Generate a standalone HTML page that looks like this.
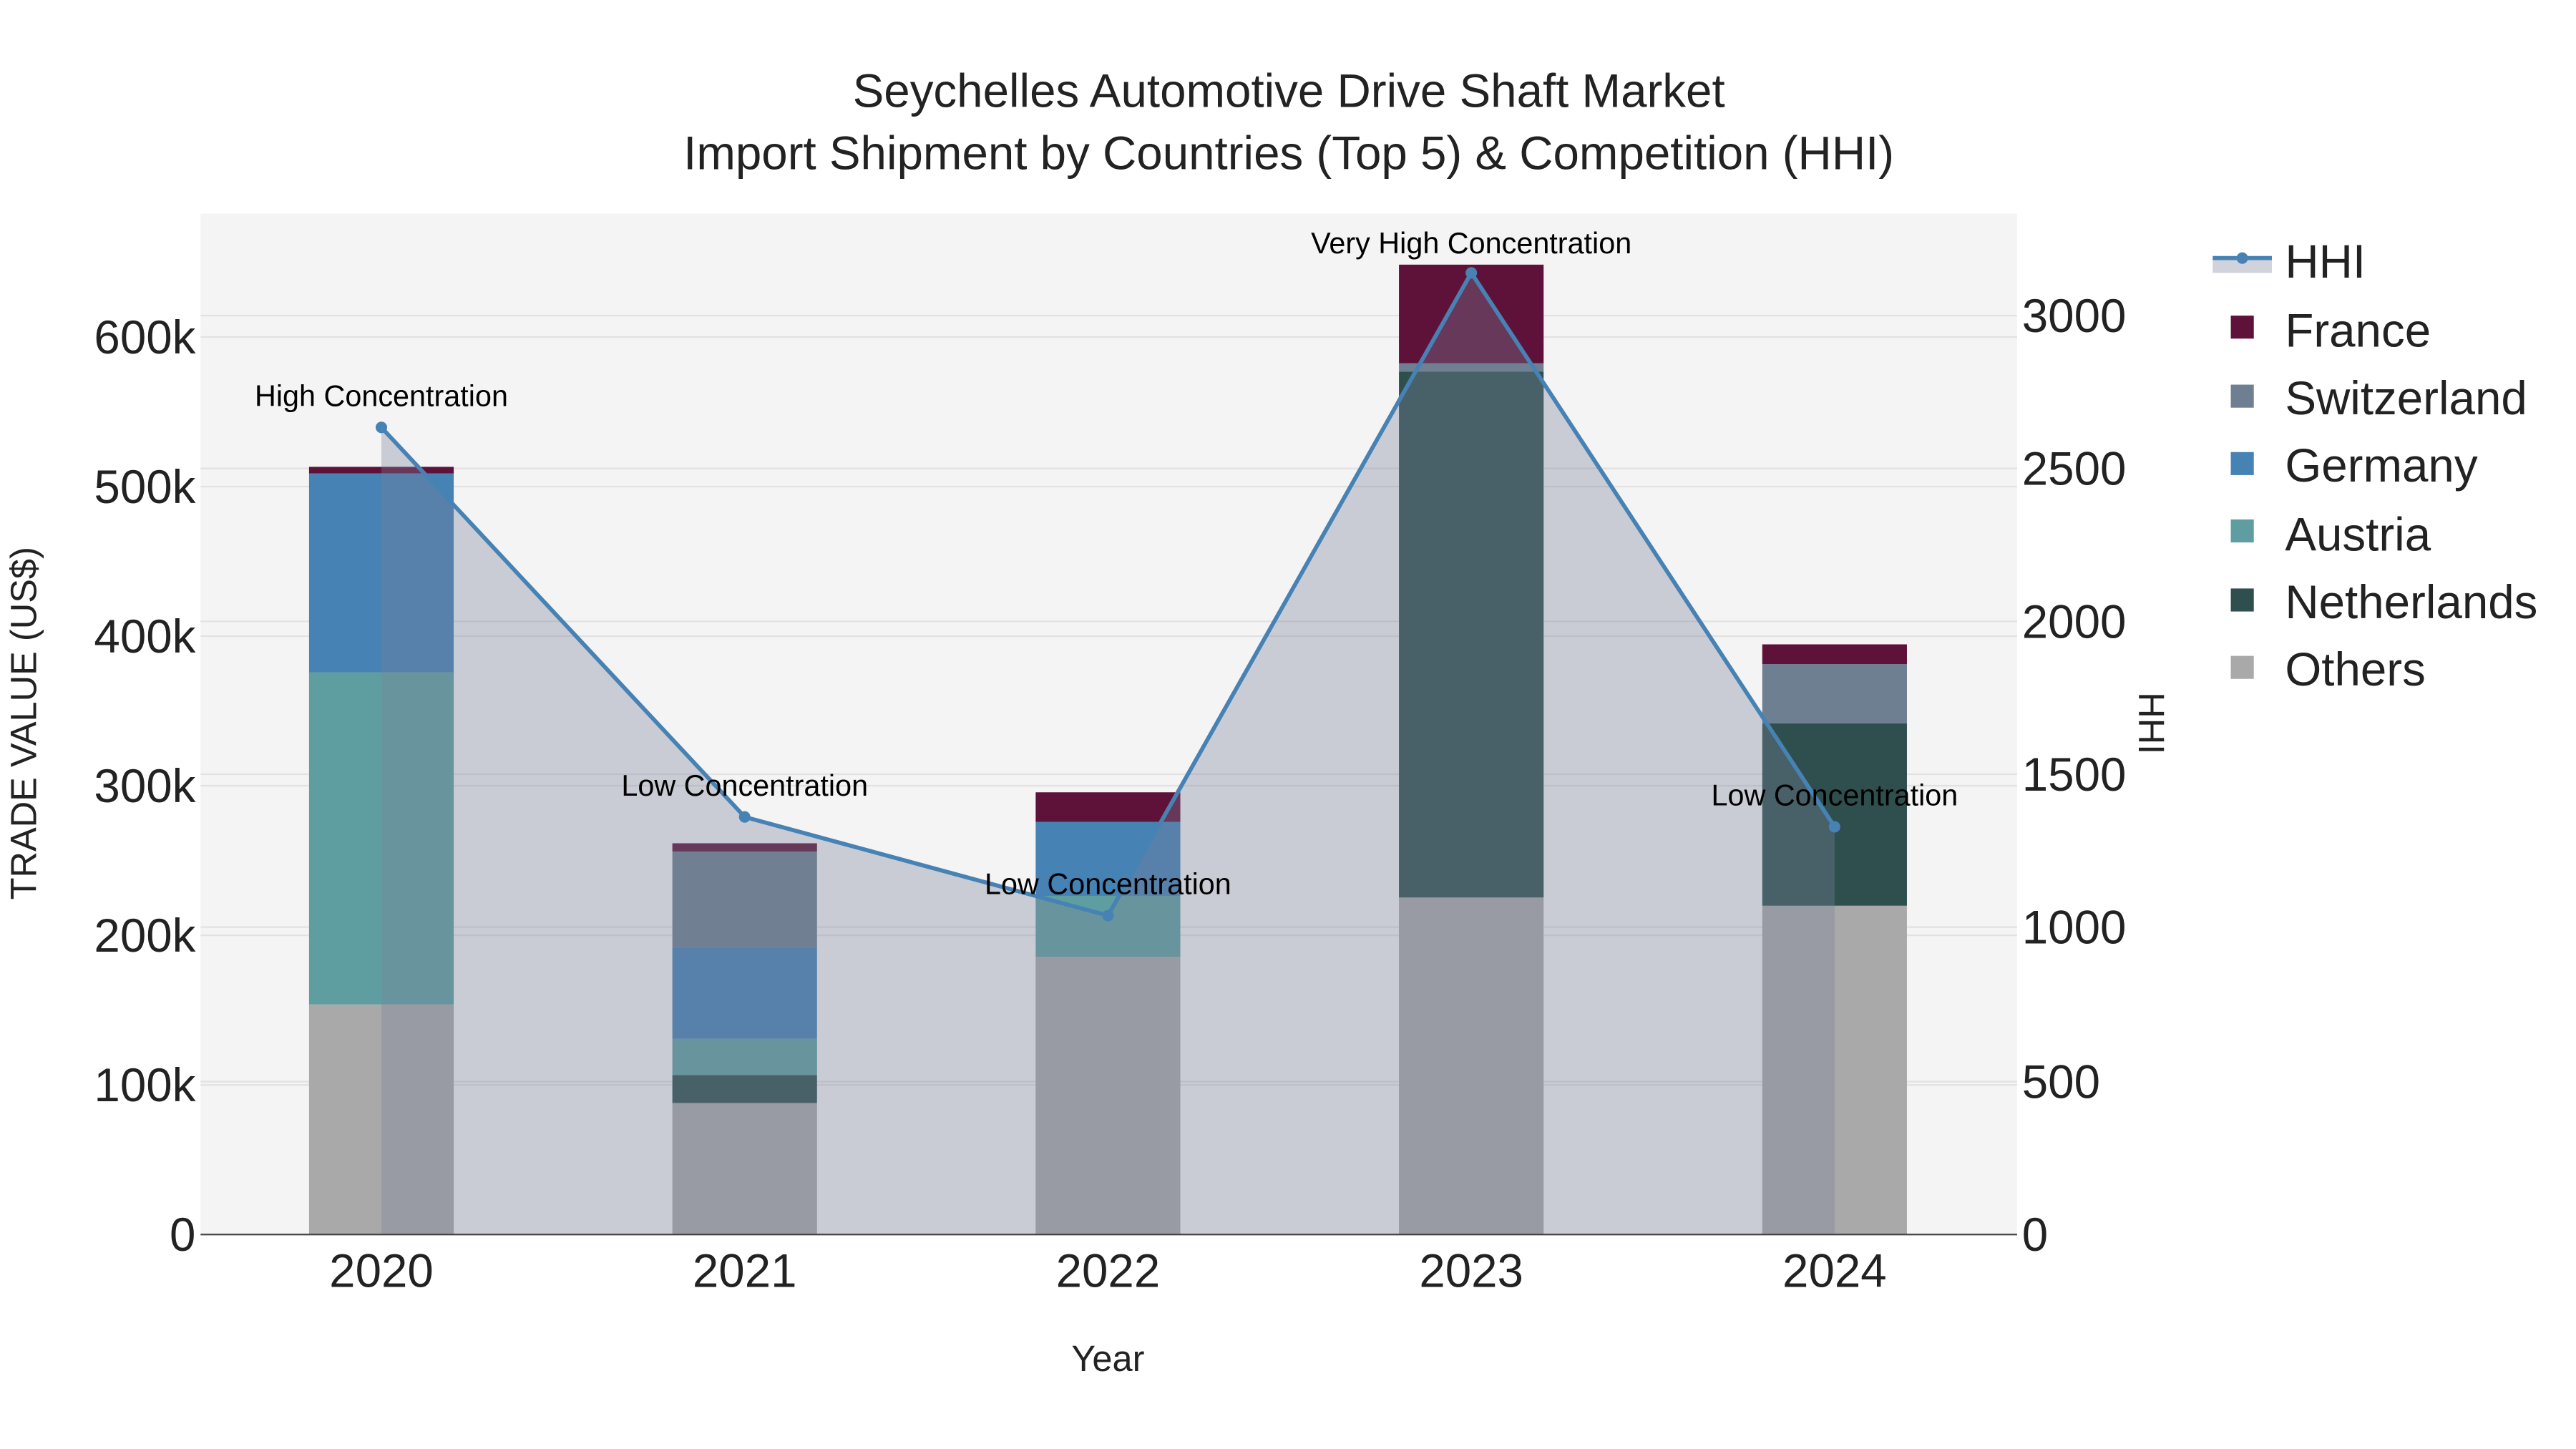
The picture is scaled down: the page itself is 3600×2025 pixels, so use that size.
<!DOCTYPE html>
<html><head><meta charset="utf-8"><style>html,body{margin:0;padding:0;background:#fff}svg{display:block}</style></head>
<body>
<svg width="3600" height="2025" viewBox="0 0 1567 881.5" preserveAspectRatio="none" xmlns="http://www.w3.org/2000/svg" font-family="Liberation Sans, sans-serif">
<rect width="1567" height="881.5" fill="#fff"/>
<rect x="122" y="130" width="1105" height="621" fill="#f4f4f4"/>
<g stroke="#e2e2e2" stroke-width="1">
<line x1="122" x2="1227" y1="660" y2="660"/><line x1="122" x2="1227" y1="569" y2="569"/><line x1="122" x2="1227" y1="478" y2="478"/><line x1="122" x2="1227" y1="387" y2="387"/><line x1="122" x2="1227" y1="296" y2="296"/><line x1="122" x2="1227" y1="205" y2="205"/>
<line x1="122" x2="1227" y1="658" y2="658"/><line x1="122" x2="1227" y1="564" y2="564"/><line x1="122" x2="1227" y1="471" y2="471"/><line x1="122" x2="1227" y1="378" y2="378"/><line x1="122" x2="1227" y1="285" y2="285"/><line x1="122" x2="1227" y1="192" y2="192"/>
</g>
<rect x="188" y="611" width="88" height="140" fill="#a9a9a9"/>
<rect x="188" y="409" width="88" height="202" fill="#5f9ea0"/>
<rect x="188" y="288" width="88" height="121" fill="#4682b4"/>
<rect x="188" y="284" width="88" height="4" fill="#5f1239"/>
<rect x="409" y="671" width="88" height="80" fill="#a9a9a9"/>
<rect x="409" y="654" width="88" height="17" fill="#2f4f4f"/>
<rect x="409" y="632" width="88" height="22" fill="#5f9ea0"/>
<rect x="409" y="576" width="88" height="56" fill="#4682b4"/>
<rect x="409" y="518" width="88" height="58" fill="#6e7f91"/>
<rect x="409" y="513" width="88" height="5" fill="#5f1239"/>
<rect x="630" y="582" width="88" height="169" fill="#a9a9a9"/>
<rect x="630" y="545" width="88" height="37" fill="#5f9ea0"/>
<rect x="630" y="500" width="88" height="45" fill="#4682b4"/>
<rect x="630" y="482" width="88" height="18" fill="#5f1239"/>
<rect x="851" y="546" width="88" height="205" fill="#a9a9a9"/>
<rect x="851" y="226" width="88" height="320" fill="#2f4f4f"/>
<rect x="851" y="221" width="88" height="5" fill="#6e7f91"/>
<rect x="851" y="161" width="88" height="60" fill="#5f1239"/>
<rect x="1072" y="551" width="88" height="200" fill="#a9a9a9"/>
<rect x="1072" y="440" width="88" height="111" fill="#2f4f4f"/>
<rect x="1072" y="404" width="88" height="36" fill="#6e7f91"/>
<rect x="1072" y="392" width="88" height="12" fill="#5f1239"/>
<polygon points="232,751 232,260 453,497 674,557 895,166 1116,503 1116,751" fill="rgba(121,130,152,0.35)"/>
<polyline points="232,260 453,497 674,557 895,166 1116,503" fill="none" stroke="#4682b4" stroke-width="2.5"/>
<g fill="#4682b4"><circle cx="232" cy="260" r="3.5"/><circle cx="453" cy="497" r="3.5"/><circle cx="674" cy="557" r="3.5"/><circle cx="895" cy="166" r="3.5"/><circle cx="1116" cy="503" r="3.5"/></g>
<line x1="122" x2="1227" y1="751" y2="751" stroke="#444" stroke-width="1"/>
<g font-size="18" fill="#000" text-anchor="middle">
<text x="232" y="247">High Concentration</text>
<text x="453" y="484">Low Concentration</text>
<text x="674" y="544">Low Concentration</text>
<text x="895" y="154">Very High Concentration</text>
<text x="1116" y="490">Low Concentration</text>
</g>
<g font-size="28.5" fill="#222" text-anchor="end">
<text x="119" y="761">0</text><text x="119" y="670">100k</text><text x="119" y="579">200k</text><text x="119" y="488">300k</text><text x="119" y="397">400k</text><text x="119" y="306">500k</text><text x="119" y="215">600k</text>
</g>
<g font-size="28.5" fill="#222" text-anchor="start">
<text x="1230" y="761">0</text><text x="1230" y="668">500</text><text x="1230" y="574">1000</text><text x="1230" y="481">1500</text><text x="1230" y="388">2000</text><text x="1230" y="295">2500</text><text x="1230" y="202">3000</text>
</g>
<g font-size="28.5" fill="#222" text-anchor="middle">
<text x="232" y="783">2020</text><text x="453" y="783">2021</text><text x="674" y="783">2022</text><text x="895" y="783">2023</text><text x="1116" y="783">2024</text>
</g>
<text x="674" y="834" font-size="22" fill="#222" text-anchor="middle">Year</text>
<text transform="translate(22,440) rotate(-90)" font-size="22" fill="#222" text-anchor="middle">TRADE VALUE (US$)</text>
<text transform="translate(1301,440) rotate(90)" font-size="22" fill="#222" text-anchor="middle">HHI</text>
<g font-size="28.5" fill="#222" text-anchor="middle">
<text x="784" y="65">Seychelles Automotive Drive Shaft Market</text>
<text x="784" y="103">Import Shipment by Countries (Top 5) &amp; Competition (HHI)</text>
</g>
<rect x="1346" y="158" width="36" height="8" fill="rgba(121,130,152,0.35)"/>
<line x1="1346" x2="1382" y1="157" y2="157" stroke="#4682b4" stroke-width="2.5"/>
<circle cx="1364" cy="157" r="3.5" fill="#4682b4"/>
<rect x="1357" y="192" width="14" height="14" fill="#5f1239"/>
<rect x="1357" y="234" width="14" height="14" fill="#6e7f91"/>
<rect x="1357" y="275" width="14" height="14" fill="#4682b4"/>
<rect x="1357" y="316" width="14" height="14" fill="#5f9ea0"/>
<rect x="1357" y="358" width="14" height="14" fill="#2f4f4f"/>
<rect x="1357" y="399" width="14" height="14" fill="#a9a9a9"/>
<g font-size="28.5" fill="#222">
<text x="1390" y="169">HHI</text><text x="1390" y="211">France</text><text x="1390" y="252">Switzerland</text><text x="1390" y="293">Germany</text><text x="1390" y="335">Austria</text><text x="1390" y="376">Netherlands</text><text x="1390" y="417">Others</text>
</g>
</svg>
</body></html>
